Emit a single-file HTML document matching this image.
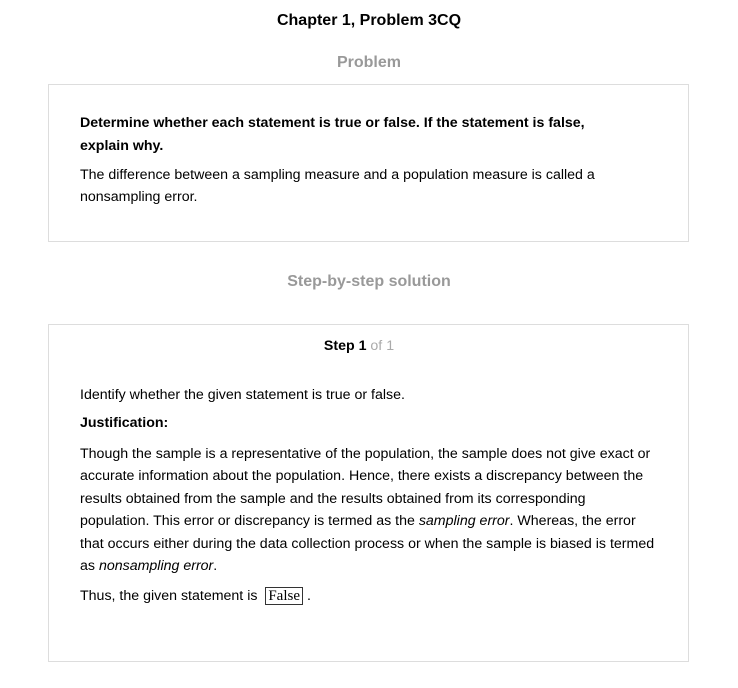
<!DOCTYPE html>
<html><head><style>
body{margin:0;background:#fff;font-family:"Liberation Sans",Arial,sans-serif;color:#000;width:738px;height:688px;overflow:hidden;position:relative;font-size:14.2px}
.a{position:absolute;white-space:nowrap}
.box{position:absolute;left:48px;width:639px;border:1px solid #ddd}
.t{position:absolute;left:80px;line-height:22px}
</style></head><body>
<div class="a" style="left:0;width:738px;text-align:center;top:12px;font-size:16px;font-weight:bold">Chapter 1, Problem 3CQ</div>
<div class="a" style="left:0;width:738px;text-align:center;top:54px;font-size:16px;font-weight:bold;color:#999">Problem</div>
<div class="box" style="top:84px;height:156px"></div>
<div class="t" style="top:112px;font-weight:bold;line-height:23px">Determine whether each statement is true or false. If the statement is false,<br>explain why.</div>
<div class="t" style="top:164px">The difference between a sampling measure and a population measure is called a<br>nonsampling error.</div>
<div class="a" style="left:0;width:738px;text-align:center;top:273px;font-size:16px;font-weight:bold;color:#999">Step-by-step solution</div>
<div class="box" style="top:324px;height:336px"></div>
<div class="a" style="left:0;width:718px;text-align:center;top:338px"><b>Step 1</b> <span style="color:#aaa">of 1</span></div>
<div class="t" style="top:384px">Identify whether the given statement is true or false.</div>
<div class="t" style="top:412px;font-weight:bold">Justification:</div>
<div class="t" style="top:443px;line-height:22.4px">Though the sample is a representative of the population, the sample does not give exact or<br>accurate information about the population. Hence, there exists a discrepancy between the<br>results obtained from the sample and the results obtained from its corresponding<br>population. This error or discrepancy is termed as the <i>sampling error</i>. Whereas, the error<br>that occurs either during the data collection process or when the sample is biased is termed<br>as <i>nonsampling error</i>.</div>
<div class="t" style="top:585px">Thus, the given statement is &nbsp;<span style="font-family:'Liberation Serif',serif;font-size:15px;border:1px solid #333;padding:0 2px;display:inline-block;line-height:16px">False</span> .</div>
</body></html>
